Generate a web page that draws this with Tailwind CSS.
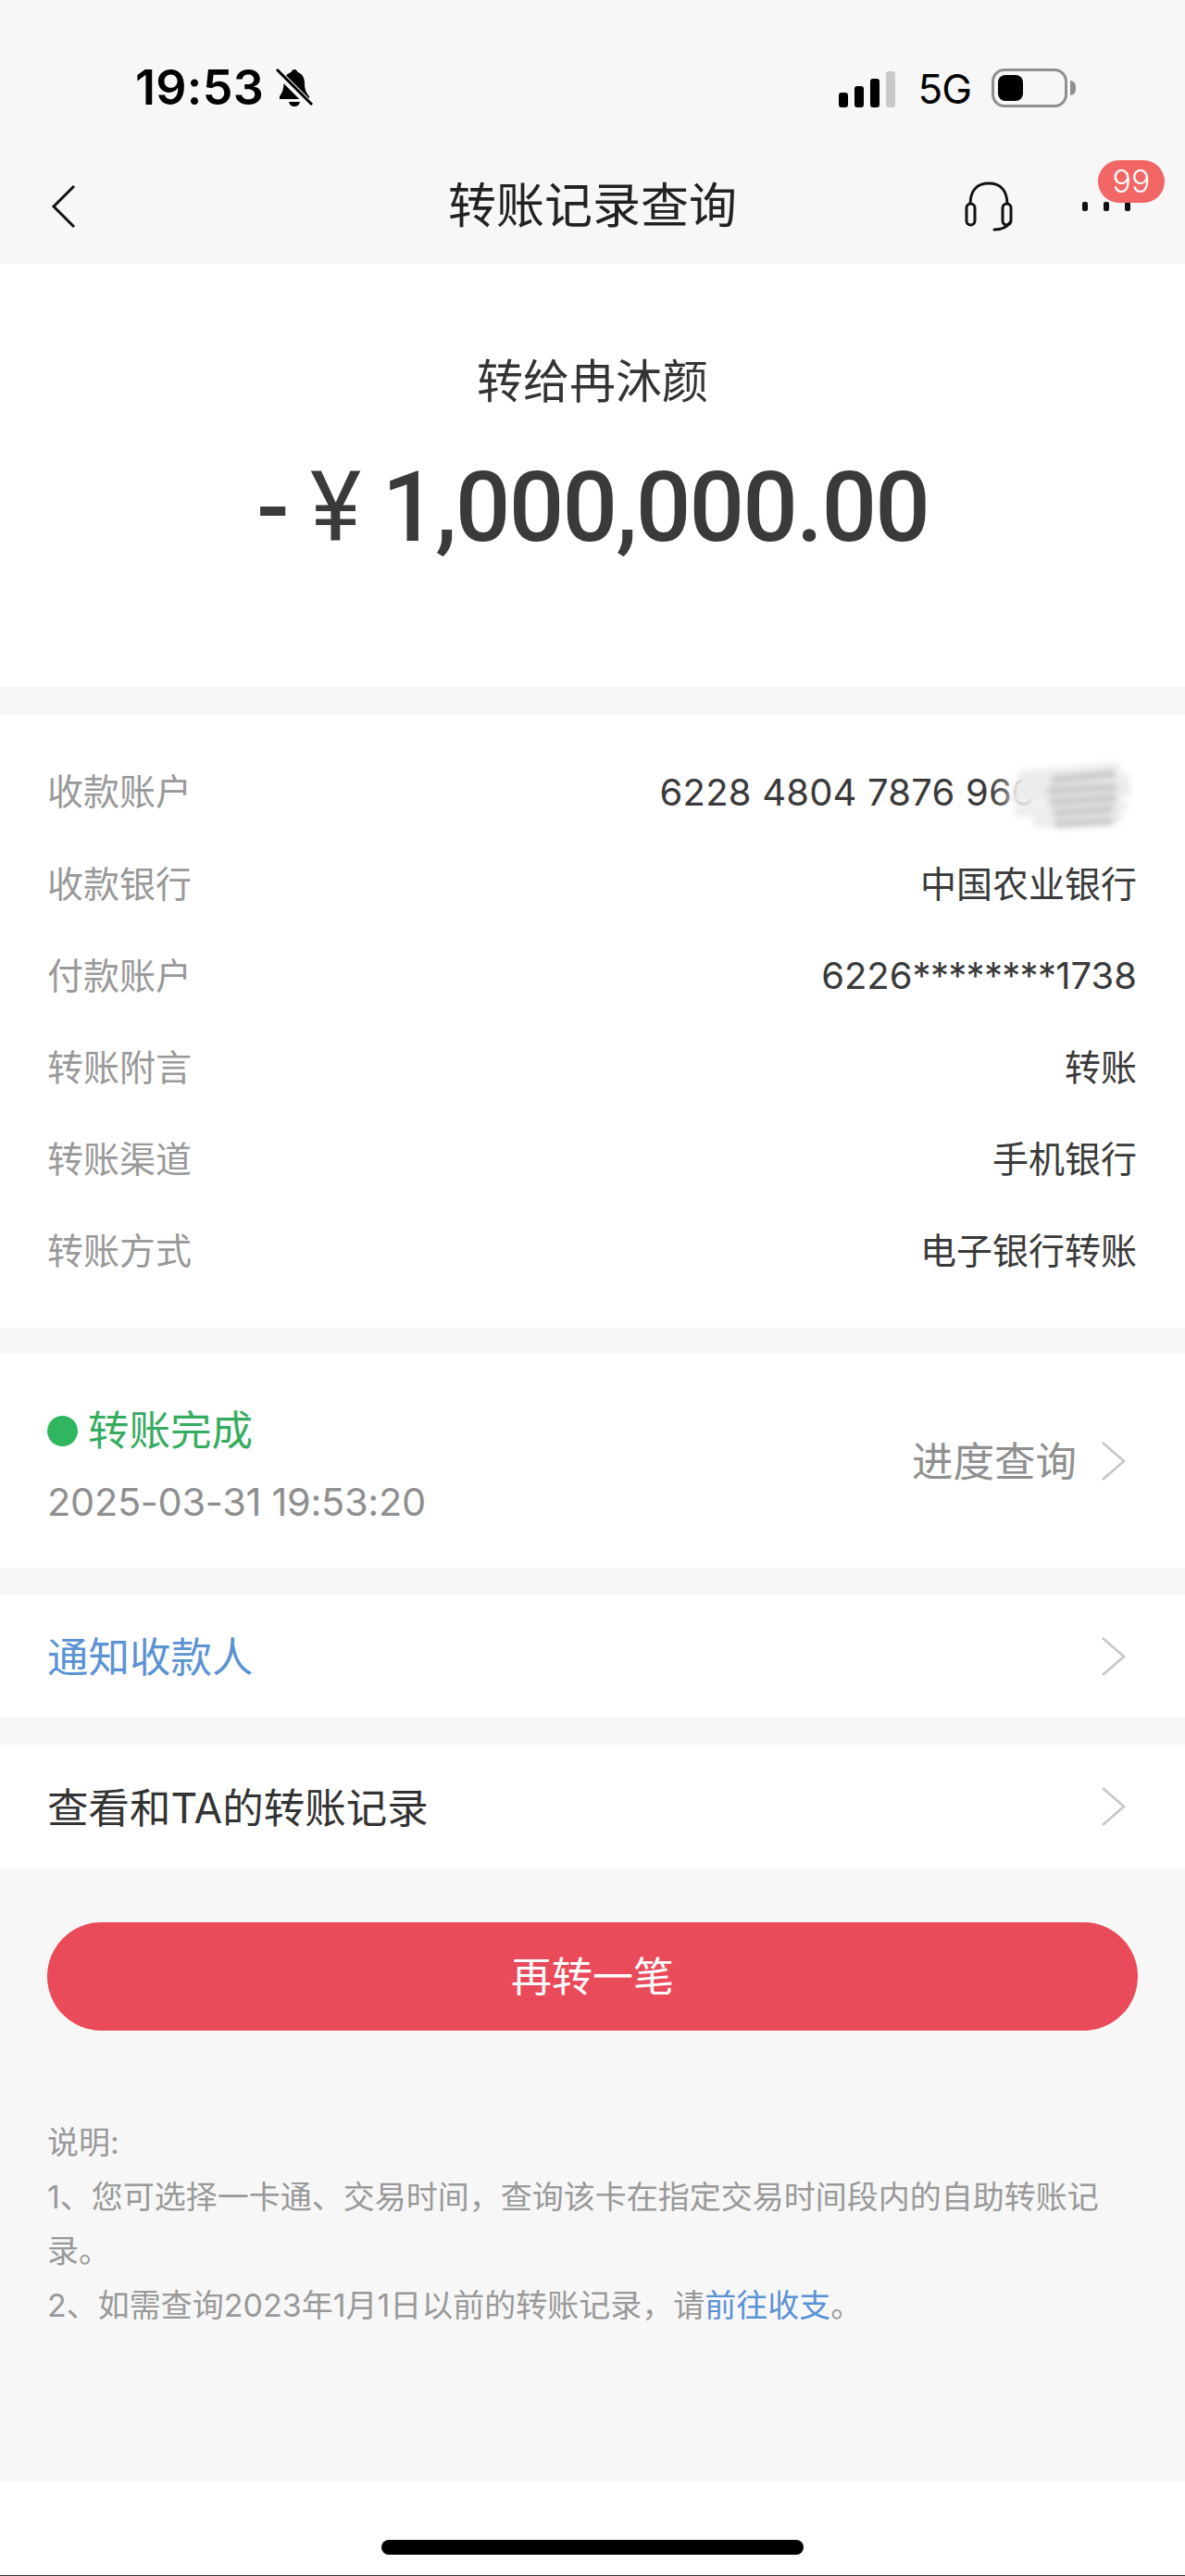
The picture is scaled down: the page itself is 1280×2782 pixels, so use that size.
<!doctype html>
<html lang="zh-CN">
  <head>
    <meta charset="UTF-8" />
    <meta name="viewport" content="width=device-width, initial-scale=1.0" />
    <title>转账记录查询</title>
    <script src="https://cdn.jsdelivr.net/npm/@tailwindcss/browser@4"></script>
  </head>

  <body class="bg-[#f7f7f7] font-['Inter','Noto_Sans_CJK_SC',sans-serif]">
    <div class="flex flex-col h-[2782px] overflow-hidden">
      <!-- Status Bar -->
      <div class="h-[160px] pt-[30px] shrink-0 flex items-center pl-[146px] pr-[118px] text-black">
        <span class="text-[52px] font-semibold leading-none tracking-[.3px]">19:53</span>
        <svg class="ml-[12px] w-[42px] h-[44px]" viewBox="0 0 42 44" fill="black">
          <path d="M21 2c2 0 3 1.500 3.500 3 5 1.500 7.500 6 7.500 12 0 6 1.500 10 5 14v3H5v-3c3-4 4.500-8 4.500-14 0-6 3-10.500 8-12C18 3.500 19 2 21 2z" />
          <path d="M15 37h12c-.5 3-3 5-6 5s-5.500-2-6-5z" />
          <path d="M2 4l37 37" stroke="#f7f7f7" stroke-width="8" />
          <path d="M2 2l38 38" stroke="black" stroke-width="3" />
        </svg>
        <div class="ml-auto flex items-end gap-[7px] h-[39px] mt-[2px]">
          <div class="w-[10px] h-[16px] rounded-[3px] bg-black"></div>
          <div class="w-[10px] h-[23px] rounded-[3px] bg-black"></div>
          <div class="w-[10px] h-[31px] rounded-[3px] bg-black"></div>
          <div class="w-[10px] h-[39px] rounded-[3px] bg-[#c9c9c9]"></div>
        </div>
        <span class="ml-[24px] text-[44px] leading-none tracking-[-1px] mt-[2px]">5G</span>
        <div class="ml-[22px] w-[82px] h-[42px] rounded-[14px] border-[3px] border-[#8f8f8f] p-[4px]">
          <div class="w-[27px] h-full rounded-[8px] bg-black"></div>
        </div>
        <div class="ml-[3px] w-[6px] h-[16px] rounded-r-full bg-[#8f8f8f]"></div>
      </div>

      <!-- Navigation Bar -->
      <nav class="h-[125px] shrink-0 relative flex items-center justify-center">
        <svg class="absolute left-[54px] top-[38px] w-[30px] h-[50px]" viewBox="0 0 30 50" fill="none" stroke="#111" stroke-width="3">
          <path d="M26 3L4 25l22 22" />
        </svg>
        <h1 class="text-[52px] leading-none text-[#222]">转账记录查询</h1>
        <svg class="absolute left-[1040px] top-[35px] w-[56px] h-[56px]" viewBox="0 0 56 56" fill="none" stroke="#111" stroke-width="3">
          <path d="M8 26C8 10 16 3 28 3s20 7 20 23" />
          <rect x="4" y="25" width="9" height="23" rx="4.500" />
          <rect x="43" y="25" width="9" height="23" rx="4.500" />
          <path d="M51 45c-3 5-9 8-17 8" stroke-linecap="round" />
        </svg>
        <div class="absolute left-[1169px] top-[58px] flex gap-[17px]">
          <div class="w-[6px] h-[10px] rounded-[2px] bg-[#111]"></div>
          <div class="w-[6px] h-[10px] rounded-[2px] bg-[#111]"></div>
          <div class="w-[6px] h-[10px] rounded-[2px] bg-[#111]"></div>
        </div>
        <div class="absolute left-[1186px] top-[13px] w-[72px] h-[46px] rounded-full bg-[#f26666] text-white text-[34px] leading-[46px] text-center font-light">99</div>
      </nav>

      <!-- Amount -->
      <section class="h-[457px] shrink-0 bg-white flex flex-col items-center pt-[99px]">
        <p class="text-[50px] leading-[56px] text-[#333]">转给冉沐颜</p>
        <p class="mt-[51px] text-[105px] leading-[116px] font-medium tracking-[-1.900px] text-[#3a3a3a] font-['Roboto','Noto_Sans_CJK_SC',sans-serif]">- <span class="font-normal">¥</span> 1,000,000.00</p>
      </section>

      <!-- Details -->
      <section class="mt-[30px] h-[662px] shrink-0 bg-white pl-[51px] pr-[52px] pt-[34px] flex flex-col text-[39px] text-[#999]">
        <div class="h-[99.200px] flex items-center justify-between relative">
          <span>收款账户</span>
          <span class="text-[40px] text-[#3a3a3a] pr-[110px] tracking-[.2px]">6228 4804 7876 966</span>
          <div class="absolute left-[1015px] top-[10px] w-[150px] h-[74px] bg-gradient-to-r from-white/0 via-white to-white"></div>
          <svg class="absolute left-[1040px] top-[14px] w-[130px] h-[86px] blur-[3px]" viewBox="0 0 130 86" fill="none" stroke-linecap="round">
            <path d="M14 18l100-8M8 30l116-8M6 42l120-8M10 56l110-6M30 68l86-6" stroke="#ececec" stroke-width="12" />
            <path d="M48 22l62-6M44 34l68-4M46 46l66-4M50 58l58-4M52 70l56-3" stroke="#c8c8c8" stroke-width="8" />
          </svg>
        </div>
        <div class="h-[99.200px] flex items-center justify-between">
          <span>收款银行</span><span class="text-[#3a3a3a]">中国农业银行</span>
        </div>
        <div class="h-[99.200px] flex items-center justify-between">
          <span>付款账户</span><span class="text-[40px] text-[#3a3a3a]">6226<span class="tracking-[-.7px]">********</span>1738</span>
        </div>
        <div class="h-[99.200px] flex items-center justify-between">
          <span>转账附言</span><span class="text-[#3a3a3a]">转账</span>
        </div>
        <div class="h-[99.200px] flex items-center justify-between">
          <span>转账渠道</span><span class="text-[#3a3a3a]">手机银行</span>
        </div>
        <div class="h-[99.200px] flex items-center justify-between">
          <span>转账方式</span><span class="text-[#3a3a3a]">电子银行转账</span>
        </div>
      </section>

      <!-- Transfer Status -->
      <section class="mt-[28px] h-[231px] shrink-0 bg-white pl-[51px] pr-[64px] flex items-center justify-between">
        <div class="mt-[6px]">
          <div class="flex items-center gap-[11px]">
            <div class="w-[33px] h-[33px] rounded-full bg-[#2fb65f]"></div>
            <span class="text-[44.500px] leading-[60px] text-[#35ac60]">转账完成</span>
          </div>
          <p class="mt-[23px] text-[41.500px] leading-[48px] text-[#8f8f8f] tracking-[-.3px]">2025-03-31 19:53:20</p>
        </div>
        <div class="flex items-center gap-[27px]">
          <span class="text-[44.500px] leading-none text-[#8f8f8f] mt-[3px]">进度查询</span>
          <svg class="w-[26px] h-[42px]" viewBox="0 0 26 42" fill="none" stroke="#c6c6c6" stroke-width="2.500"><path d="M1 1l23 20L1 41" /></svg>
        </div>
      </section>

      <!-- Notify Payee -->
      <section class="mt-[29px] h-[133px] shrink-0 bg-white pl-[51px] pr-[64px] flex items-center justify-between">
        <span class="text-[44.500px] text-[#5a92d4] mt-[4px]">通知收款人</span>
        <svg class="w-[26px] h-[42px]" viewBox="0 0 26 42" fill="none" stroke="#c6c6c6" stroke-width="2.500"><path d="M1 1l23 20L1 41" /></svg>
      </section>

      <!-- Records With Payee -->
      <section class="mt-[29px] h-[134px] shrink-0 bg-white pl-[51px] pr-[64px] flex items-center justify-between">
        <span class="text-[44.500px] text-[#333] mt-[4px]">查看和TA的转账记录</span>
        <svg class="w-[26px] h-[42px]" viewBox="0 0 26 42" fill="none" stroke="#c6c6c6" stroke-width="2.500"><path d="M1 1l23 20L1 41" /></svg>
      </section>

      <!-- Action + Notes -->
      <div class="flex-1 px-[51px] pt-[58px]">
        <button class="w-full h-[117px] rounded-full bg-[#e94b5a] text-white text-[44px]">再转一笔</button>
        <div class="mt-[92px] text-[34px] leading-[58.500px] text-[#999]">
          <p>说明:</p>
          <p>1、您可选择一卡通、交易时间，查询该卡在指定交易时间段内的自助转账记录。</p>
          <p>2、如需查询2023年1月1日以前的转账记录，请<span class="text-[#5a92d4]">前往收支</span>。</p>
        </div>
      </div>

      <!-- Home Indicator -->
      <div class="h-[102px] shrink-0 bg-white flex flex-col items-center">
        <div class="mt-[63px] w-[456px] h-[16px] rounded-full bg-black"></div>
        <div class="mt-auto w-full h-[1px] bg-[#333]"></div>
      </div>
    </div>
  </body>
</html>
